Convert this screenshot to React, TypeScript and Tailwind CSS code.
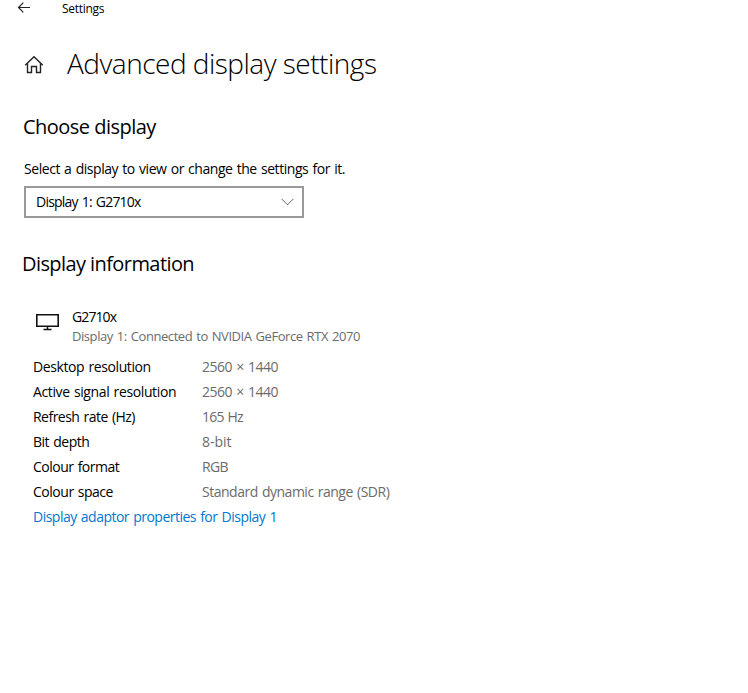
const DETAILS = [
  { label: 'Desktop resolution', value: '2560 × 1440', labelClass: 'tracking-[-0.4px]', valueClass: 'tracking-[-0.47px]' },
  { label: 'Active signal resolution', value: '2560 × 1440', labelClass: 'tracking-[-0.38px]', valueClass: 'tracking-[-0.47px]' },
  { label: 'Refresh rate (Hz)', value: '165 Hz', labelClass: 'tracking-[-0.52px]', valueClass: 'tracking-[-0.8px]' },
  { label: 'Bit depth', value: '8-bit', labelClass: 'tracking-[-0.5px]', valueClass: 'tracking-normal' },
  { label: 'Colour format', value: 'RGB', labelClass: 'tracking-[-0.5px]', valueClass: 'tracking-[-0.6px]' },
  { label: 'Colour space', value: 'Standard dynamic range (SDR)', labelClass: 'tracking-[-0.48px]', valueClass: 'tracking-[-0.49px]' },
];

function BackIcon() {
  return (
    <svg width="14" height="12" viewBox="0 0 14 12" fill="none" stroke="#222" strokeWidth="1.2" aria-hidden>
      <path d="M13 5.5H1.5M6.3 0.7L1.5 5.5L6.3 10.3" />
    </svg>
  );
}

function HomeIcon() {
  return (
    <svg width="20" height="20" viewBox="0 0 20 20" fill="none" stroke="#222" strokeWidth="1.4" aria-hidden>
      <path d="M1.2 10.3L10 1.8L18.8 10.3" />
      <path d="M3.5 8.2V17.5H7.5V11.5H12.5V17.5H16.5V8.2" />
    </svg>
  );
}

function MonitorIcon() {
  return (
    <svg width="24" height="18" viewBox="0 0 24 18" fill="none" stroke="#111" aria-hidden>
      <path d="M0.8 1.7H22.2V13.3H0.8Z" strokeWidth="1.6" />
      <path d="M11.5 14V16.5M7.5 16.5H15.5" strokeWidth="1.5" />
    </svg>
  );
}

export default function App() {
  return (
    <div className="min-h-screen bg-white font-['Open_Sans',sans-serif] text-sm text-black">
      <header className="flex h-4 items-center">
        <button type="button" aria-label="Back" className="ml-[17px] w-[45px]">
          <BackIcon />
        </button>
        <span className="pt-0.5 text-xs leading-4 tracking-[-0.3px]">Settings</span>
      </header>

      <main className="pl-[23px]">
        <div className="mt-[29px] flex h-[38px] items-center">
          <div className="mt-0.5 w-11 pl-px">
            <HomeIcon />
          </div>
          <h1 className="pb-0.5 text-[28px] font-light leading-[38px] tracking-[-0.5px]">Advanced display settings</h1>
        </div>

        <section className="mt-[30px]">
          <h2 className="text-xl leading-7 tracking-[-0.52px]">Choose display</h2>
          <p className="mt-[18px] pl-px leading-5 tracking-[-0.45px] [word-spacing:1px]">
            Select a display to view or change the settings for it.
          </p>
          <button
            type="button"
            className="ml-px mt-[7px] flex h-8 w-[280px] items-center justify-between border-2 border-[#999] pl-2.5 pr-2"
          >
            <span className="leading-5 tracking-[-0.77px] [word-spacing:1px]">Display 1: G2710x</span>
            <svg width="13" height="8" viewBox="0 0 13 8" fill="none" stroke="#666" aria-hidden>
              <path d="M0.5 0.8L6.5 6.8L12.5 0.8" />
            </svg>
          </button>
        </section>

        <section className="mt-8">
          <h2 className="-ml-px text-xl leading-7 tracking-[-0.58px]">Display information</h2>
          <div className="mt-[29px] flex">
            <div className="ml-[13px] mt-1.5 w-9">
              <MonitorIcon />
            </div>
            <div className="leading-[19px]">
              <p className="tracking-[-0.9px]">G2710x</p>
              <p className="pt-px text-[13px] leading-[19px] tracking-[-0.43px] text-[#6b6b6b] [word-spacing:1px]">
                Display 1: Connected to NVIDIA GeForce RTX 2070
              </p>
            </div>
          </div>

          <dl className="ml-2.5 mt-2 [word-spacing:1px]">
            {DETAILS.map((row) => (
              <div key={row.label} className="flex h-[25px] leading-[25px]">
                <dt className={`w-[169px] ${row.labelClass}`}>{row.label}</dt>
                <dd className={`text-[#6b6b6b] ${row.valueClass}`}>{row.value}</dd>
              </div>
            ))}
          </dl>
          <a
            href="#"
            className="ml-2.5 block w-fit leading-[25px] tracking-[-0.51px] text-[#0078d0] [word-spacing:1px]"
          >
            Display adaptor properties for Display 1
          </a>
        </section>
      </main>
    </div>
  );
}
